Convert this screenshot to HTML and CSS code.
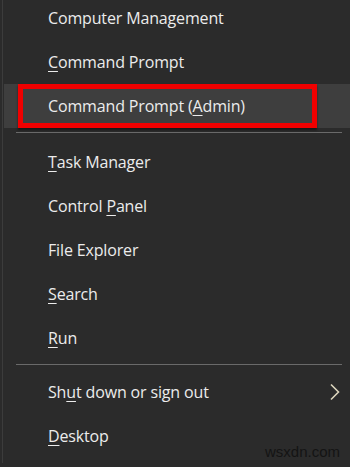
FILE: index.html
```html
<!DOCTYPE html>
<html>
<head>
<meta charset="utf-8">
<link rel="stylesheet" href="styles.css">
</head>
<body>
<div class="menu">
  <div class="group">
    <div class="item"><span>Computer Management</span></div>
    <div class="item"><span><u>C</u>ommand Prompt</span></div>
    <div class="item active"><span class="redbox"><span>Command Prompt (<u>A</u>dmin)</span></span></div>
  </div>
  <div class="sep"></div>
  <div class="group">
    <div class="item"><span><u>T</u>ask Manager</span></div>
    <div class="item"><span>Control <u>P</u>anel</span></div>
    <div class="item"><span>File Explorer</span></div>
    <div class="item"><span><u>S</u>earch</span></div>
    <div class="item"><span><u>R</u>un</span></div>
  </div>
  <div class="sep sep2"></div>
  <div class="group">
    <div class="item sub"><span>Sh<u>u</u>t down or sign out</span>
      <svg class="chev" width="12" height="18" viewBox="0 0 12 18"><polyline points="2,1.5 9.5,9 2,16.5" fill="none" stroke="#dcd5bd" stroke-width="1.6"/></svg>
    </div>
    <div class="item"><span><u>D</u>esktop</span></div>
  </div>
  <div class="wm">wsxdn.com</div>
</div>
</body>
</html>
```

FILE: styles.css
```css
html, body {
  margin: 0;
  padding: 0;
  background: #2b2b2b;
  height: 467px;
  overflow: hidden;
}
.menu {
  position: relative;
  height: 467px;
  border-left: 1px solid #2b2b2b;
  box-shadow: inset 1px 0 0 #3c3c3c;
  margin-left: 1px;
  font-family: "Open Sans", "Noto Sans", sans-serif;
  font-size: 16px;
  color: #ececec;
}
.group:first-child {
  margin-top: -4px;
}
.item {
  height: 44px;
  display: flex;
  align-items: center;
  padding-left: 46px;
  box-sizing: border-box;
  letter-spacing: -0.15px;
  white-space: nowrap;
}
.item u {
  text-decoration: underline;
  text-underline-offset: 3px;
  text-decoration-thickness: 1px;
}
.item.active {
  background: #3e3e3e;
  margin-left: 2px;
  padding-left: 14px;
}
.redbox {
  display: flex;
  align-items: center;
  height: 44px;
  width: 299px;
  box-sizing: border-box;
  border: 5px solid #f00000;
  padding-left: 25px;
  box-shadow: 0 2px 2px rgba(0,0,0,0.5);
}
.sep {
  height: 1px;
  background: #6a6a6a;
  margin: 4px 8px 7px 14px;
}
.sep2 {
  margin-bottom: 5px;
}
.item.sub {
  justify-content: space-between;
  padding-right: 9px;
}
.wm {
  position: absolute;
  right: 10px;
  bottom: 3px;
  font-family: "Liberation Sans", Arial, sans-serif;
  font-size: 15px;
  color: #141414;
}
```
